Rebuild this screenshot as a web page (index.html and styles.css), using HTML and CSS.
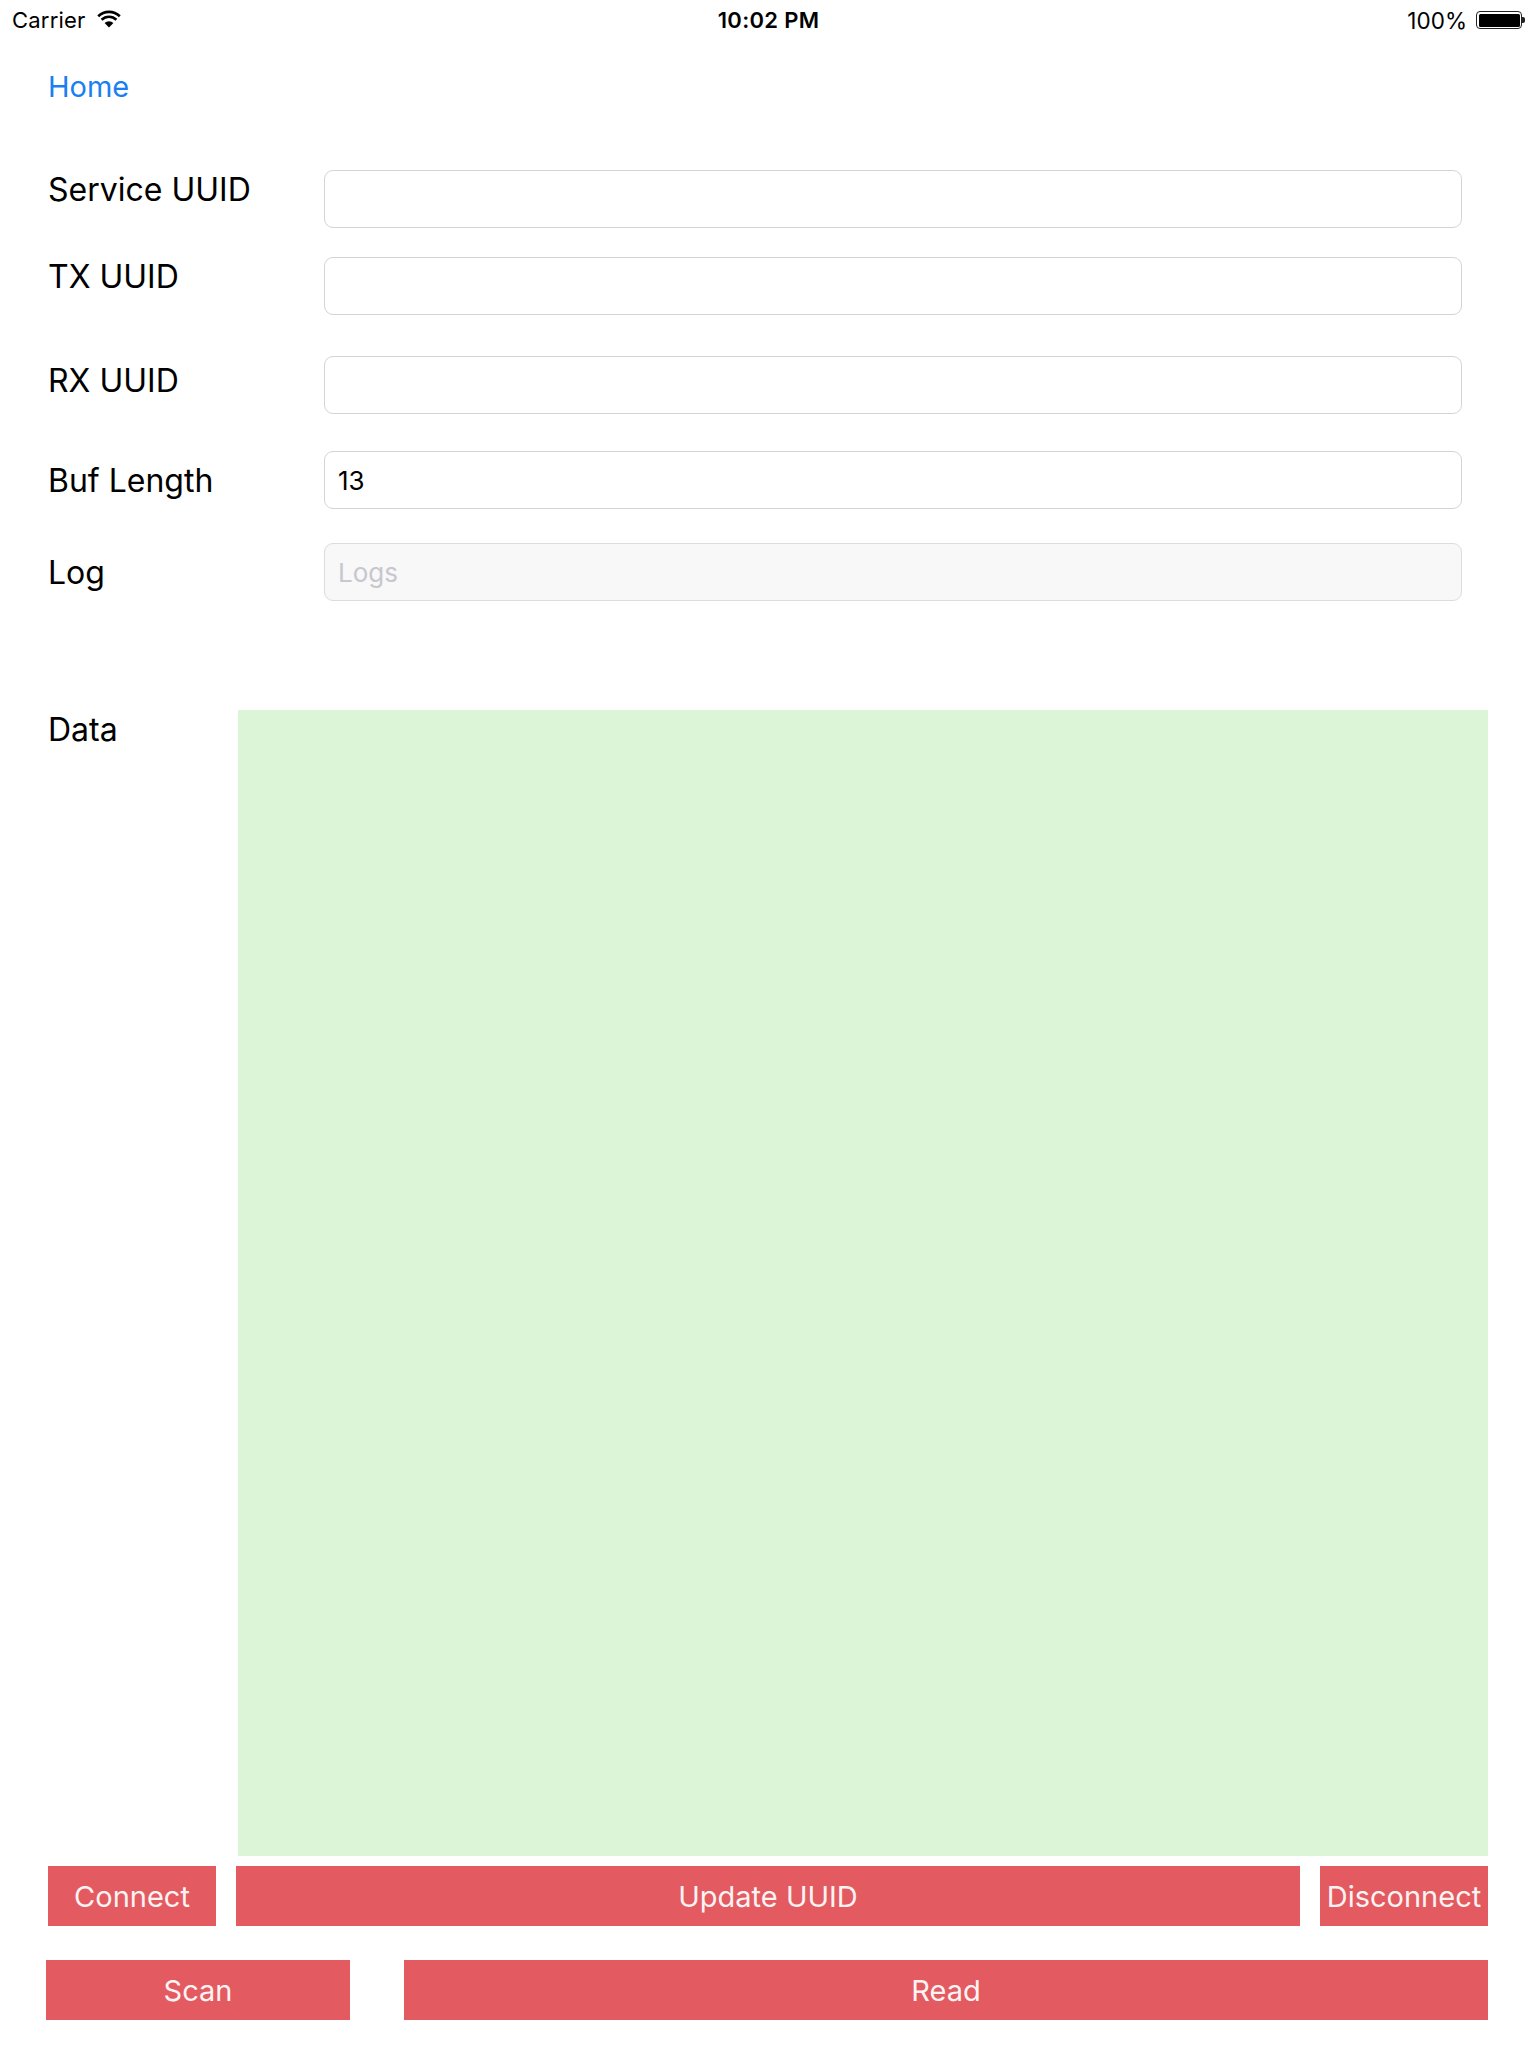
FILE: index.html
```html
<!DOCTYPE html>
<html>
<head>
<meta charset="utf-8">
<link rel="stylesheet" href="styles.css">
</head>
<body>
<div class="status">
  <div class="status-left">
    <span class="carrier">Carrier</span>
    <svg class="wifi" width="26" height="18" viewBox="0 0 26 18">
      <path d="M13 17.5 L8.6 12.9 A6.4 6.4 0 0 1 17.4 12.9 Z" fill="#000"/>
      <path d="M5.6 9.8 A10.6 10.6 0 0 1 20.4 9.8" fill="none" stroke="#000" stroke-width="2.6"/>
      <path d="M2.2 6.3 A15.4 15.4 0 0 1 23.8 6.3" fill="none" stroke="#000" stroke-width="2.6"/>
    </svg>
  </div>
  <div class="time">10:02 PM</div>
  <div class="status-right">
    <span class="pct">100%</span>
    <span class="battery"><span class="battery-fill"></span></span>
    <span class="battery-nub"></span>
  </div>
</div>

<div class="nav"><span class="nav-link">Home</span></div>

<div class="form">
  <div class="row row-service">
    <div class="label">Service UUID</div>
    <div class="field"></div>
  </div>
  <div class="row row-tx">
    <div class="label">TX UUID</div>
    <div class="field"></div>
  </div>
  <div class="row row-rx">
    <div class="label label-rx">RX UUID</div>
    <div class="field"></div>
  </div>
  <div class="row row-buf">
    <div class="label label-low">Buf Length</div>
    <div class="field"><span class="value">13</span></div>
  </div>
  <div class="row row-log">
    <div class="label label-low">Log</div>
    <div class="field field-disabled"><span class="placeholder">Logs</span></div>
  </div>
</div>

<div class="data-row">
  <div class="data-label">Data</div>
  <div class="data-area"></div>
</div>

<div class="btn-row btn-row-1">
  <div class="btn btn-connect">Connect</div>
  <div class="btn btn-update">Update UUID</div>
  <div class="btn btn-disconnect">Disconnect</div>
</div>
<div class="btn-row btn-row-2">
  <div class="btn btn-scan">Scan</div>
  <div class="btn btn-read">Read</div>
</div>
</body>
</html>
```
FILE: styles.css
```css
* { box-sizing: border-box; }
body {
  margin: 0;
  background: #fff;
  font-family: Inter, "Liberation Sans", sans-serif;
  color: #000;
  width: 1536px;
}

/* status bar */
.status {
  height: 40px;
  display: grid;
  grid-template-columns: 1fr auto 1fr;
  align-items: center;
  padding: 0 11px 0 12px;
  font-size: 22px;
}
.status-left { display: flex; align-items: center; gap: 10px; }
.carrier { letter-spacing: 0.2px; }
.wifi { margin-top: -2px; }
.time { font-weight: 600; letter-spacing: 0.3px; }
.status-right { display: flex; align-items: center; justify-content: flex-end; }
.pct { margin-right: 9px; font-size: 22.5px; }
.battery {
  width: 46px; height: 18px;
  border: 1.5px solid #222;
  border-radius: 4px;
  padding: 1.5px;
  display: flex;
}
.battery-fill { flex: 1; background: #000; border-radius: 1.5px; }
.battery-nub { width: 3px; height: 6px; background: #222; border-radius: 0 2px 2px 0; }

/* nav */
.nav {
  height: 88px;
  padding: 29px 0 0 48px;
}
.nav-link {
  font-size: 29px;
  line-height: 36px;
  color: #1a7ff2;
}

/* form */
.form {
  padding: 42px 74px 0 48px;
  display: flex;
  flex-direction: column;
}
.row { display: flex; align-items: flex-start; }
.row-tx { margin-top: 29px; }
.row-rx { margin-top: 41px; }
.row-buf { margin-top: 37px; }
.row-log { margin-top: 34px; }
.label {
  width: 276px;
  font-size: 32px;
  line-height: 40px;
}
.label-rx { padding-top: 5px; }
.label-low { padding-top: 10px; }
.field {
  flex: 1;
  height: 58px;
  border: 1.5px solid #d4d4d4;
  border-radius: 9px;
  background: #fff;
  display: flex;
  align-items: center;
  padding-left: 13px;
  font-size: 26px;
}
.field-disabled { background: #f8f8f8; border-color: #dcdcdc; }
.value { color: #000; }
.placeholder { color: #c7c7cd; }

/* data */
.data-row {
  display: flex;
  margin-top: 109px;
  padding-left: 48px;
}
.data-label {
  width: 190px;
  font-size: 32px;
  line-height: 40px;
}
.data-area {
  width: 1250px;
  height: 1146px;
  background: #dcf5d7;
}

/* buttons */
.btn-row { display: flex; }
.btn-row-1 { margin-top: 10px; padding-left: 48px; gap: 20px; }
.btn-row-2 { margin-top: 34px; padding-left: 46px; gap: 54px; }
.btn {
  height: 60px;
  background: #e35a61;
  color: #fdf3f3;
  font-size: 29px;
  display: flex;
  align-items: center;
  justify-content: center;
  white-space: nowrap;
}
.btn-connect { width: 168px; }
.btn-update { width: 1064px; }
.btn-disconnect { width: 168px; }
.btn-scan { width: 304px; }
.btn-read { width: 1084px; }
```
